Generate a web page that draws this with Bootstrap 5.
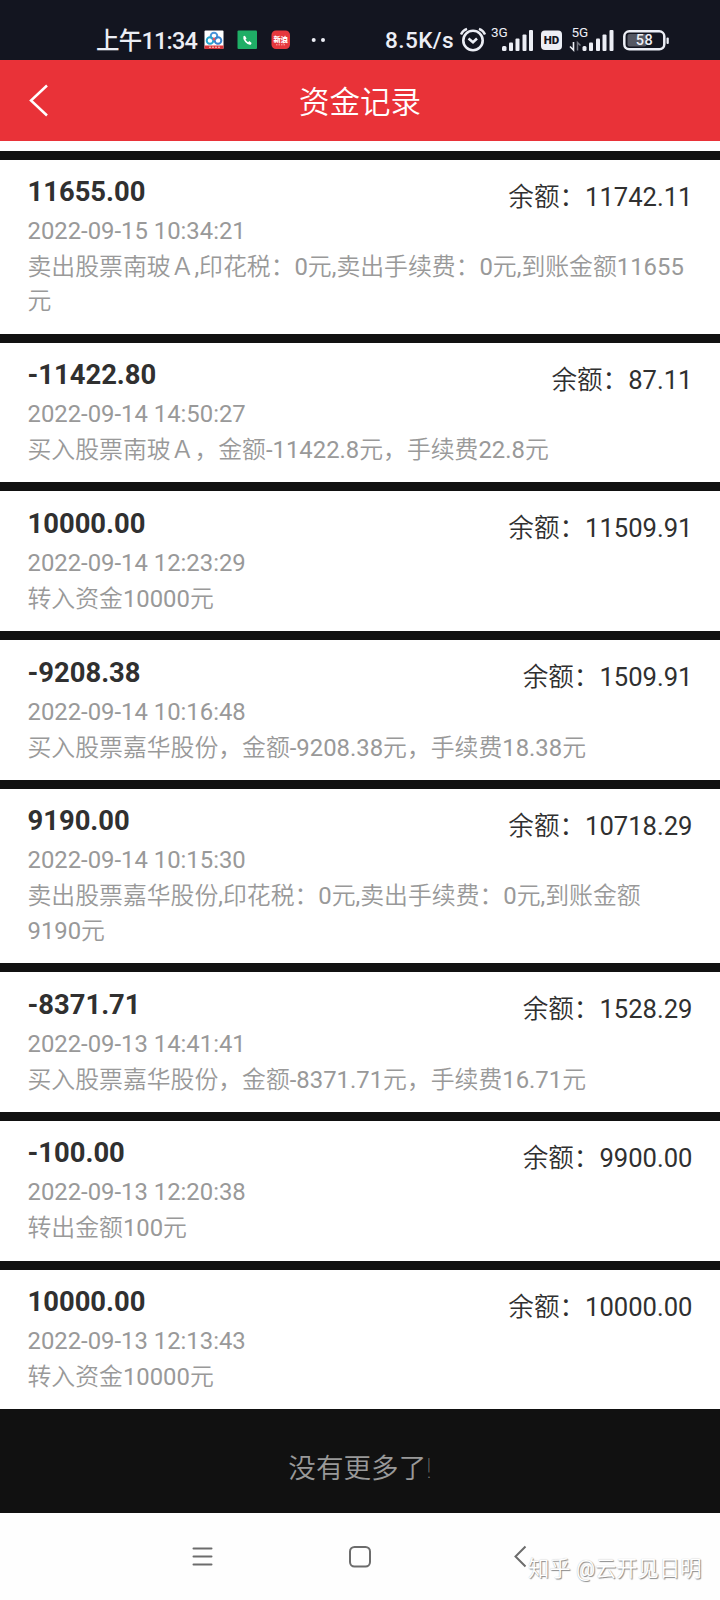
<!DOCTYPE html>
<html lang="zh-CN">
<head>
<meta charset="utf-8">
<meta name="viewport" content="width=device-width, initial-scale=1">
<title>资金记录</title>
<link href="https://cdn.jsdelivr.net/npm/bootstrap@5.3.0/dist/css/bootstrap.min.css" rel="stylesheet">
<style>
body{font-family:Roboto,"Noto Sans CJK SC DemiLight","Noto Sans CJK SC",sans-serif;background:#fff;color:#303030;width:720px;height:1600px;overflow:hidden}
.statusbar{height:60px;background:#131520;color:#eceef5;padding:20px 50px 0 96px}
.clock{font:500 23.5px/42px Roboto,"Noto Sans CJK SC",sans-serif;width:108px;white-space:nowrap;letter-spacing:-.8px}
.speed{font:500 22.6px/42px Roboto,sans-serif;width:73px;margin-left:53px;white-space:nowrap;letter-spacing:.4px}
.titlebar{height:80.5px;background:#e93238;color:#fff}
.titlebar h1{font-size:30.5px;line-height:80px;font-weight:400;padding-top:5px}
.strip{height:10px}
.entry{height:148.8px;border-top:9px solid #111;padding:0 27.5px;white-space:nowrap}
.entry.tall{height:183.1px}
.amount{font-size:27.4px;line-height:34px;font-weight:700;padding-top:15.5px;height:51px}
.balance{font-size:25.6px;line-height:34px;padding-top:20px}
.stamp,.detail{font-size:23.85px;color:#999}
.entry-text{margin-top:-2.5px}
.stamp{line-height:40px;height:39px}
.detail{line-height:34.2px}
.nomore{height:103.8px;background:#111;color:#999;font-size:27.6px;line-height:120px}
.nomore span{font-weight:100;opacity:.8}
.sysnav{height:87px;background:#fefefe}
.watermark{right:18.5px;top:40px;font-size:21.3px;line-height:32px;color:#fff;text-shadow:1px 1px 1px #888,0 0 1px #bbb;white-space:nowrap}
</style>
</head>
<body>
<header class="statusbar d-flex">
  <div class="clock">上午11:34</div>
  <svg width="130" height="40" viewBox="204 20 130 40">
    <rect x="204.500" y="30.500" width="19" height="18.500" rx="1" fill="#fff"/>
    <g fill="none" stroke-width="2"><circle cx="214" cy="36" r="3.300" stroke="#4a93d8"/><circle cx="210" cy="40.500" r="3.300" stroke="#26a6cf"/><circle cx="218" cy="40.500" r="3.300" stroke="#3783d0"/></g>
    <circle cx="214" cy="39" r="1.400" fill="#e45361"/>
    <path d="M204.500 45.500h19V48q0 1-1 1h-17q-1 0-1-1z" fill="#d9373c"/><path d="M209 47.200h11" stroke="#ffd8cc" stroke-dasharray="2 1"/>
    <rect x="237.500" y="30.500" width="19.500" height="18.500" rx="1" fill="#1fae66"/>
    <path d="M243.400 36.300l1.500-.6 1.700 2.700-1.100 1.200q.9 1.800 2.600 2.600l1.200-1.100 2.300 1.800-.6 1.600q-2.800.9-5.800-2.400-2.700-3-1.800-5.800z" fill="#fff"/>
    <rect x="271.500" y="30.500" width="18.500" height="18.500" rx="4.500" fill="#e5383d"/>
    <text x="280.800" y="41.500" text-anchor="middle" font-family="Noto Sans CJK SC" font-weight="900" font-size="7.300" fill="#fff">新浪</text>
    <path d="M276 44.800h10" stroke="#ffb0ae" stroke-dasharray="1.500 1"/>
    <circle cx="313.700" cy="40" r="2" fill="#eceef5"/><circle cx="323" cy="40" r="2" fill="#eceef5"/>
  </svg>
  <div class="speed ms-auto">8.5K/s</div>
  <svg width="212" height="40" viewBox="458 20 212 40" class="flex-shrink-0" fill="#eceef5" font-family="Roboto">
    <g fill="none" stroke="#eceef5" stroke-width="2.600"><circle cx="473" cy="40.500" r="9.700"/><path d="M468.500 38.500l4.500 3.700 4-3.700"/><path d="M461 34.500q1.500-4 6-5.700M479 28.800q4.500 1.700 6 5.700" stroke-width="2.300"/></g>
    <text x="491" y="37" font-size="13.500">3G</text>
    <g><rect x="502" y="46" width="4.500" height="5" rx="1.500"/><rect x="509" y="42.500" width="4" height="8.500" rx="1"/><rect x="515.500" y="38.500" width="4" height="12.500" rx="1"/><rect x="522.500" y="34.500" width="4" height="16.500" rx="1"/><rect x="529" y="30" width="4" height="21" rx="1"/></g>
    <rect x="541" y="30.500" width="21" height="19.500" rx="4"/>
    <text x="551.500" y="44.300" text-anchor="middle" fill="#131520" font-size="11.500" font-weight="900">HD</text>
    <text x="571.500" y="37" font-size="13.500">5G</text>
    <path d="M573.500 42v8l-3.500-3.500" fill="none" stroke="#eceef5" stroke-width="1.600"/><path d="M577.500 50.500v-8l3 3" fill="none" stroke="#777a84" stroke-width="1.500"/>
    <g><rect x="582.500" y="46" width="4" height="5" rx="1.500"/><rect x="589" y="42.500" width="4" height="8.500" rx="1"/><rect x="596" y="38.500" width="4" height="12.500" rx="1"/><rect x="602.500" y="34.500" width="4" height="16.500" rx="1"/><rect x="609.500" y="30" width="4" height="21" rx="1"/></g>
    <rect x="624.300" y="31.300" width="40" height="18" rx="5" fill="none" stroke="#eceef5" stroke-width="2.500"/>
    <rect x="627.500" y="34" width="19" height="12.500" rx="2" fill="#555762"/>
    <rect x="666.500" y="37.500" width="2.300" height="6.500" rx="1"/>
    <text x="644.600" y="45.400" text-anchor="middle" font-size="14.500" font-weight="500" letter-spacing=".6">58</text>
  </svg>
</header>
<nav class="titlebar d-flex align-items-center position-relative">
  <svg width="60" height="80" viewBox="0 60 60 80" class="position-absolute start-0 top-0"><path d="M47 85.500L31 100.500 47 115.500" fill="none" stroke="#fff" stroke-width="2.500"/></svg>
  <h1 class="m-0 w-100 text-center">资金记录</h1>
</nav>
<div class="strip"></div>
<main>
  <section class="entry tall">
    <div class="d-flex justify-content-between"><div class="amount">11655.00</div><div class="balance">余额：11742.11</div></div>
    <div class="entry-text"><div class="stamp">2022-09-15 10:34:21</div><div class="detail">卖出股票南玻Ａ,印花税：0元,卖出手续费：0元,到账金额11655<br>元</div></div>
  </section>
  <section class="entry">
    <div class="d-flex justify-content-between"><div class="amount">-11422.80</div><div class="balance">余额：87.11</div></div>
    <div class="entry-text"><div class="stamp">2022-09-14 14:50:27</div><div class="detail">买入股票南玻Ａ，金额-11422.8元，手续费22.8元</div></div>
  </section>
  <section class="entry">
    <div class="d-flex justify-content-between"><div class="amount">10000.00</div><div class="balance">余额：11509.91</div></div>
    <div class="entry-text"><div class="stamp">2022-09-14 12:23:29</div><div class="detail">转入资金10000元</div></div>
  </section>
  <section class="entry">
    <div class="d-flex justify-content-between"><div class="amount">-9208.38</div><div class="balance">余额：1509.91</div></div>
    <div class="entry-text"><div class="stamp">2022-09-14 10:16:48</div><div class="detail">买入股票嘉华股份，金额-9208.38元，手续费18.38元</div></div>
  </section>
  <section class="entry tall">
    <div class="d-flex justify-content-between"><div class="amount">9190.00</div><div class="balance">余额：10718.29</div></div>
    <div class="entry-text"><div class="stamp">2022-09-14 10:15:30</div><div class="detail">卖出股票嘉华股份,印花税：0元,卖出手续费：0元,到账金额<br>9190元</div></div>
  </section>
  <section class="entry">
    <div class="d-flex justify-content-between"><div class="amount">-8371.71</div><div class="balance">余额：1528.29</div></div>
    <div class="entry-text"><div class="stamp">2022-09-13 14:41:41</div><div class="detail">买入股票嘉华股份，金额-8371.71元，手续费16.71元</div></div>
  </section>
  <section class="entry">
    <div class="d-flex justify-content-between"><div class="amount">-100.00</div><div class="balance">余额：9900.00</div></div>
    <div class="entry-text"><div class="stamp">2022-09-13 12:20:38</div><div class="detail">转出金额100元</div></div>
  </section>
  <section class="entry">
    <div class="d-flex justify-content-between"><div class="amount">10000.00</div><div class="balance">余额：10000.00</div></div>
    <div class="entry-text"><div class="stamp">2022-09-13 12:13:43</div><div class="detail">转入资金10000元</div></div>
  </section>
</main>
<div class="nomore text-center">没有更多了<span>!</span></div>
<footer class="sysnav position-relative">
  <svg width="720" height="87" viewBox="0 1513 720 87" fill="none" stroke="#6c6c6c" stroke-width="2" class="d-block"><path d="M193.500 1548.500h18M193.500 1556.500h18M193.500 1564.500h18" stroke-linecap="round"/><rect x="350" y="1547" width="20" height="19.500" rx="4.500"/><path d="M525.500 1546.500L515.500 1556.500 525.500 1566.500"/></svg>
  <div class="watermark position-absolute">知乎 @云开见日明</div>
</footer>
<script src="https://cdn.jsdelivr.net/npm/bootstrap@5.3.0/dist/js/bootstrap.bundle.min.js"></script>
</body>
</html>
